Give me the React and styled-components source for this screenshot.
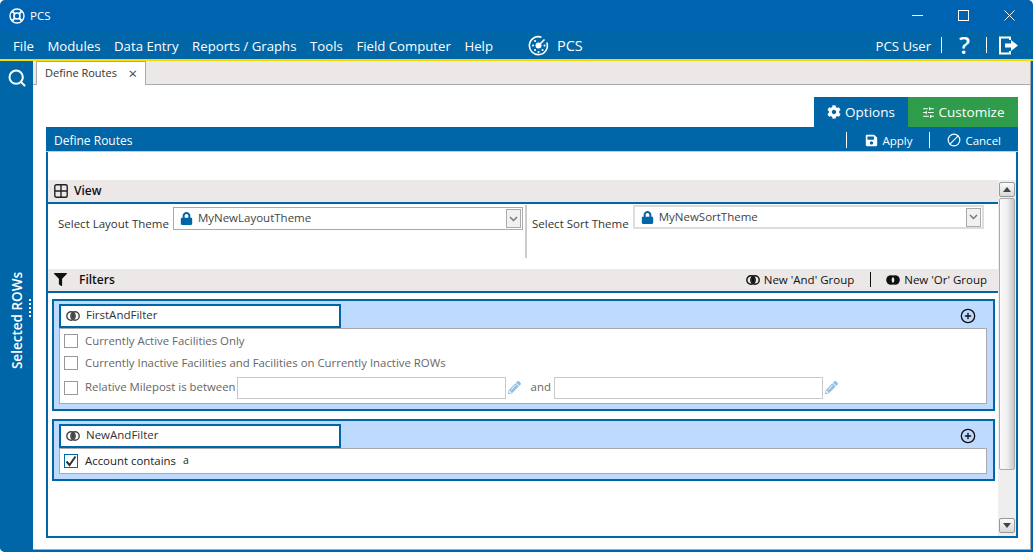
import React from "react";
import styled, { createGlobalStyle } from "styled-components";
import { FaCog, FaFilter, FaLock, FaPencilAlt, FaSave } from "react-icons/fa";
import { Ban, CirclePlus, Search, SlidersHorizontal } from "lucide-react";

const GlobalStyle = createGlobalStyle`
  html, body {
    margin: 0;
    padding: 0;
    background: #fff;
    font-family: "Open Sans", "Noto Sans", sans-serif;
  }
  * {
    box-sizing: border-box;
  }
`;

const Window = styled.div`
  width: 1033px;
  height: 552px;
  display: flex;
  flex-direction: column;
  background: #0063b1;
  border-radius: 5px 5px 0 5px;
  overflow: hidden;
`;

const TitleBar = styled.div`
  height: 31px;
  flex: none;
  display: flex;
  align-items: center;
  padding-left: 9px;
  gap: 5px;
  color: #fff;
  font-size: 11.5px;
`;

const WindowControls = styled.div`
  margin-left: auto;
  display: flex;
  align-items: center;
  padding-right: 18px;
  gap: 35px;
`;

const MenuBar = styled.div`
  height: 30px;
  flex: none;
  display: flex;
  align-items: center;
  background: #0066a8;
  border-bottom: 2px solid #f6dc00;
  color: #fff;
  font-size: 13.2px;
`;

const Menu = styled.nav`
  width: 528px;
  padding: 2px 0 0 13px;
  display: flex;
  gap: 13.6px;
`;

const Brand = styled.div`
  display: flex;
  align-items: center;
  gap: 8px;
  font-size: 14.5px;
`;

const UserArea = styled.div`
  margin-left: auto;
  padding-right: 14px;
  display: flex;
  align-items: center;
`;

const UserName = styled.span`
  margin-top: 2px;
`;

const MenuDivider = styled.span`
  width: 1px;
  height: 16px;
  background: #fff;
  margin: ${(p) => p.$margin};
`;

const Help = styled.span`
  font-size: 24px;
  font-weight: 600;
  line-height: 26px;
`;

const Body = styled.div`
  flex: 1;
  display: flex;
  min-height: 0;
`;

const Rail = styled.aside`
  position: relative;
  width: 33px;
  flex: none;
  background: #0066a8;
  color: #fff;
  display: flex;
  flex-direction: column;
  align-items: center;
  padding-top: 7px;
`;

const RailLabel = styled.div`
  writing-mode: vertical-rl;
  transform: rotate(180deg);
  margin-top: 184px;
  font-size: 13.5px;
  font-weight: 600;
  white-space: nowrap;
`;

const Grip = styled.span`
  position: absolute;
  left: 29px;
  top: 238px;
  width: 2px;
  height: 18px;
  background: repeating-linear-gradient(#fff 0 2px, transparent 2px 4px);
`;

const Main = styled.main`
  flex: 1;
  display: flex;
  flex-direction: column;
  background: #fff;
  margin: 0 2px 2px 0;
  border-right: 1px solid #a9a9a9;
  border-bottom: 1px solid #a9a9a9;
`;

const TabStrip = styled.div`
  height: 24px;
  flex: none;
  display: flex;
  padding-left: 3px;
  background: #ece8e7;
  border-bottom: 1px solid #aaa;
`;

const Tab = styled.div`
  width: 110px;
  height: 24px;
  padding: 0 8px 2px 8px;
  display: flex;
  align-items: center;
  justify-content: space-between;
  background: #fff;
  border: 1px solid #aaa;
  border-bottom: none;
  font-size: 11px;
  color: #333;
`;

const Close = styled.span`
  font-size: 15px;
  line-height: 12px;
  color: #444;
`;

const ModeTabs = styled.div`
  flex: none;
  display: flex;
  justify-content: flex-end;
  margin: 12px 12px 0 0;
`;

const ModeTab = styled.div`
  height: 30px;
  width: ${(p) => p.$width}px;
  display: flex;
  align-items: center;
  justify-content: center;
  gap: 4px;
  color: #fff;
  font-size: 13.5px;
  font-weight: 500;
  background: ${(p) => p.$bg};
`;

const Panel = styled.section`
  flex: 1;
  min-height: 0;
  margin: 0 12px 11px 13px;
  display: flex;
  flex-direction: column;
  border: 2px solid #0066a8;
  border-top: none;
`;

const PanelHeader = styled.header`
  height: 25px;
  flex: none;
  margin: 0 -2px;
  padding: 2px 17px 0 8px;
  display: flex;
  align-items: center;
  background: #0066a8;
  border-bottom: 1px solid #f6dc00;
  color: #fff;
  font-size: 12px;
`;

const HeaderAction = styled.div`
  display: flex;
  align-items: center;
  gap: 4px;
  height: 16px;
  font-size: 11.5px;
  font-weight: 500;
  padding-left: ${(p) => p.$pad}px;
  border-left: 1px solid #fff;
  margin-left: ${(p) => p.$gap}px;
`;

const CancelIcon = styled(Ban)`
  transform: scaleX(-1);
`;

const Spacer = styled.span`
  flex: 1;
`;

const PanelBody = styled.div`
  flex: 1;
  min-height: 0;
  display: flex;
  padding-top: 28px;
`;

const Content = styled.div`
  flex: 1;
  min-width: 0;
`;

const SectionHeader = styled.div`
  height: 24px;
  display: flex;
  align-items: center;
  background: #ece8e7;
  border-bottom: 2px solid #0066a8;
  padding: 0 11px 1px 6px;
  font-size: 12px;
  font-weight: 600;
  color: #111;
`;

const SectionTitle = styled.span`
  margin-left: ${(p) => p.$gap}px;
`;

const GroupAction = styled.span`
  display: flex;
  align-items: center;
  gap: 4px;
  font-size: 11.5px;
  font-weight: 400;
`;

const ActionDivider = styled.span`
  width: 1px;
  height: 15px;
  background: #111;
  margin: 0 15px 0 16px;
`;

const ViewRow = styled.div`
  height: 65px;
  display: flex;
`;

const ViewCell = styled.div`
  display: flex;
  align-items: flex-start;
  width: ${(p) => p.$width}px;
  padding-left: ${(p) => p.$pad}px;
  padding-top: ${(p) => p.$top}px;
  gap: 4px;
`;

const ViewDivider = styled.span`
  width: 2px;
  height: 53px;
  margin: 1px 5px 0 0;
  background: #ccc;
`;

const FieldLabel = styled.label`
  font-size: 11.5px;
  line-height: 16px;
  margin-top: ${(p) => p.$top}px;
  color: #333;
  white-space: nowrap;
`;

const Select = styled.div`
  width: ${(p) => p.$width}px;
  height: ${(p) => p.$height}px;
  display: flex;
  align-items: center;
  padding: 0 1px 0 6px;
  gap: 5px;
  border: ${(p) => p.$border};
  font-size: 11.5px;
  color: #444;
  background: #fff;
`;

const SelectValue = styled.span`
  flex: 1;
  margin-top: -2px;
`;

const ArrowButton = styled.span`
  width: 15px;
  height: 19px;
  display: flex;
  align-items: center;
  justify-content: center;
  background: #f1f1f1;
  border: 1px solid #aaa;
`;

const Group = styled.div`
  margin: ${(p) => p.$top}px 3px 0 4px;
  padding: 3px 6px 5px 5px;
  background: #bedaff;
  border: 2px solid #0066a8;
`;

const GroupHead = styled.div`
  display: flex;
  align-items: center;
  justify-content: space-between;
  padding-right: 11px;
`;

const NameBox = styled.div`
  width: 282px;
  height: 24px;
  display: flex;
  align-items: center;
  gap: 6px;
  padding: 0 0 3px 5px;
  background: #fff;
  border: 2px solid #0066a8;
  font-size: 11.5px;
  color: #333;

  svg {
    margin-top: 3px;
  }
`;

const Rows = styled.div`
  background: #fff;
  border: 1px solid #aaa;
  padding: ${(p) => p.$pad};
  display: flex;
  flex-direction: column;
`;

const Row = styled.div`
  height: ${(p) => p.$height}px;
  display: flex;
  align-items: center;
  padding: 0 0 2px 4px;
  font-size: 11.4px;
  color: ${(p) => (p.$active ? "#222" : "#666")};
`;

const Check = styled.span`
  width: 14px;
  height: 14px;
  flex: none;
  margin: 2px 7px 0 0;
  display: flex;
  align-items: center;
  justify-content: center;
  border: 1px solid ${(p) => (p.$checked ? "#0066a8" : "#999")};
`;

const ValueInput = styled.span`
  width: 269px;
  height: 22px;
  margin: 2px 0 0 ${(p) => p.$gap}px;
  border: 1px solid #c9c9c9;
`;

const Pencil = styled(FaPencilAlt)`
  width: 13px;
  height: 13px;
  margin: 2px 0 0 2px;
  color: #93bfe0;
`;

const AndLabel = styled.span`
  margin-left: 10px;
`;

const SmallValue = styled.span`
  margin-left: 7px;
  font-size: 10.5px;
`;

const Scrollbar = styled.div`
  width: 18px;
  flex: none;
  padding: 2px 1px 3px 1px;
  display: flex;
  flex-direction: column;
  background: #eee;
`;

const ScrollButton = styled.div`
  height: 15px;
  flex: none;
  display: flex;
  align-items: center;
  justify-content: center;
  background: linear-gradient(#fafafa, #d8d8d8);
  border: 1px solid #999;
  border-radius: 2px;
`;

const Thumb = styled.div`
  height: 272px;
  margin-top: 1px;
  background: linear-gradient(90deg, #fafafa, #f0f0f0 50%, #c8c8c8);
  border: 1px solid #aaa;
  border-radius: 2px;
`;

const Logo = ({ size = 16 }) => (
  <svg width={size} height={size} viewBox="0 0 16 16" fill="none" stroke="#fff">
    <circle cx="8" cy="8" r="7" strokeWidth="1.4" />
    <circle cx="8" cy="8" r="3" strokeWidth="1.6" />
    <path d="M3.5 3.5 6 6M12.5 3.5 10 6M3.5 12.5 6 10M12.5 12.5 10 10" strokeWidth="1.8" />
  </svg>
);

const BrandLogo = () => (
  <svg width="21" height="21" viewBox="0 0 21 21" fill="none" stroke="#fff">
    <path d="M13.5 2.2A9 9 0 1 0 18.8 7.5" strokeWidth="1.6" />
    <circle cx="10.5" cy="10.5" r="3" fill="#fff" stroke="none" />
    <path d="M12 9 16.5 4.5" strokeWidth="1.6" />
    <path d="M5 10.5h.1M7 6h.1M7 15h.1M10.500 17h.1M14.500 15h.1M16.500 10.500h.1" strokeWidth="2" strokeLinecap="round" />
  </svg>
);

const Logout = () => (
  <svg width="21" height="21" viewBox="0 0 21 21" fill="none">
    <path d="M12 5V2.500H2V18.500H12V16" stroke="#fff" strokeWidth="2" />
    <path d="M7 8.500H13V5L20 10.500 13 16V12.500H7Z" fill="#fff" />
  </svg>
);

const Venn = ({ color = "#444", filled }) => (
  <svg width="14" height="10" viewBox="0 0 14 10">
    {filled ? (
      <>
        <circle cx="5" cy="5" r="4.800" fill={color} />
        <circle cx="9" cy="5" r="4.800" fill={color} />
        <path d="M7 2a4 4 0 0 1 0 6 4 4 0 0 1 0-6Z" fill="#ece8e7" />
      </>
    ) : (
      <>
        <circle cx="5" cy="5" r="4.200" fill="none" stroke={color} strokeWidth="1.400" />
        <circle cx="9" cy="5" r="4.200" fill="none" stroke={color} strokeWidth="1.400" />
        <path d="M7 1.500a4.200 4.200 0 0 1 0 7 4.200 4.200 0 0 1 0-7Z" fill={color} />
      </>
    )}
  </svg>
);

const GridIcon = () => (
  <svg width="14" height="14" viewBox="0 0 14 14" fill="none" stroke="#222" strokeWidth="1.400">
    <rect x=".8" y=".8" width="12.400" height="12.400" rx="1.500" />
    <path d="M7 1v12M1 7h12" />
  </svg>
);

const Caret = ({ up }) => (
  <svg width="8" height="5" viewBox="0 0 8 5">
    <path d={up ? "M0 5 4 0 8 5Z" : "M0 0 4 5 8 0Z"} fill="#444" />
  </svg>
);

const Chevron = () => (
  <svg width="9" height="6" viewBox="0 0 9 6" fill="none" stroke="#777" strokeWidth="1.500">
    <path d="M1 1 4.500 4.500 8 1" />
  </svg>
);

const Tick = () => (
  <svg width="12" height="12" viewBox="0 0 12 12" fill="none" stroke="#333" strokeWidth="2">
    <path d="M1.500 6.500 4.500 10 10.500 1.500" />
  </svg>
);

const GroupHeadRow = ({ name }) => (
  <GroupHead>
    <NameBox>
      <Venn />
      {name}
    </NameBox>
    <CirclePlus size={16} color="#111" strokeWidth={2} />
  </GroupHead>
);

const App = () => {
  return (
    <>
      <GlobalStyle />
      <Window>
        <TitleBar>
          <Logo />
          PCS
          <WindowControls>
            <svg width="11" height="11" viewBox="0 0 11 11" stroke="#fff"><path d="M0 5.500h11" /></svg>
            <svg width="11" height="11" viewBox="0 0 11 11" fill="none" stroke="#fff"><rect x=".5" y=".5" width="10" height="10" /></svg>
            <svg width="11" height="11" viewBox="0 0 11 11" stroke="#fff"><path d="M.5.500l10 10M10.500.500l-10 10" /></svg>
          </WindowControls>
        </TitleBar>
        <MenuBar>
          <Menu>
            <span>File</span>
            <span>Modules</span>
            <span>Data Entry</span>
            <span>Reports / Graphs</span>
            <span>Tools</span>
            <span>Field Computer</span>
            <span>Help</span>
          </Menu>
          <Brand>
            <BrandLogo />
            PCS
          </Brand>
          <UserArea>
            <UserName>PCS User</UserName>
            <MenuDivider $margin="0 17px 0 10px" />
            <Help>?</Help>
            <MenuDivider $margin="0 11px 0 16px" />
            <Logout />
          </UserArea>
        </MenuBar>
        <Body>
          <Rail>
            <Search size={20} strokeWidth={2.4} />
            <RailLabel>Selected ROWs</RailLabel>
            <Grip />
          </Rail>
          <Main>
            <TabStrip>
              <Tab>
                Define Routes
                <Close>×</Close>
              </Tab>
            </TabStrip>
            <ModeTabs>
              <ModeTab $width={94} $bg="#0066a8">
                <FaCog size={14} />
                Options
              </ModeTab>
              <ModeTab $width={110} $bg="#2e9c4b">
                <SlidersHorizontal size={13} />
                Customize
              </ModeTab>
            </ModeTabs>
            <Panel>
              <PanelHeader>
                Define Routes
                <Spacer />
                <HeaderAction $pad={18} $gap={0}>
                  <FaSave size={13} />
                  Apply
                </HeaderAction>
                <HeaderAction $pad={17} $gap={17}>
                  <CancelIcon size={14} />
                  Cancel
                </HeaderAction>
              </PanelHeader>
              <PanelBody>
                <Content>
                  <SectionHeader>
                    <GridIcon />
                    <SectionTitle $gap={6}>View</SectionTitle>
                  </SectionHeader>
                  <ViewRow>
                    <ViewCell $width={477} $pad={10} $top={3}>
                      <FieldLabel $top={9}>Select Layout Theme</FieldLabel>
                      <Select $width={350} $height={23} $border="1px solid #aaa">
                        <FaLock size={13} color="#0066a8" />
                        <SelectValue>MyNewLayoutTheme</SelectValue>
                        <ArrowButton><Chevron /></ArrowButton>
                      </Select>
                    </ViewCell>
                    <ViewDivider />
                    <ViewCell $pad={0} $top={1}>
                      <FieldLabel $top={11}>Select Sort Theme</FieldLabel>
                      <Select $width={351} $height={24} $border="2px solid #ddd">
                        <FaLock size={13} color="#0066a8" />
                        <SelectValue>MyNewSortTheme</SelectValue>
                        <ArrowButton><Chevron /></ArrowButton>
                      </Select>
                    </ViewCell>
                  </ViewRow>
                  <SectionHeader>
                    <FaFilter size={13} color="#111" />
                    <SectionTitle $gap={12}>Filters</SectionTitle>
                    <Spacer />
                    <GroupAction>
                      <Venn color="#111" />
                      New 'And' Group
                    </GroupAction>
                    <ActionDivider />
                    <GroupAction>
                      <Venn color="#111" filled />
                      New 'Or' Group
                    </GroupAction>
                  </SectionHeader>
                  <Group $top={6}>
                    <GroupHeadRow name="FirstAndFilter" />
                    <Rows $pad="1px 0 2px">
                      <Row $height={22}>
                        <Check />
                        Currently Active Facilities Only
                      </Row>
                      <Row $height={22}>
                        <Check />
                        Currently Inactive Facilities and Facilities on Currently Inactive ROWs
                      </Row>
                      <Row $height={27}>
                        <Check />
                        Relative Milepost is between
                        <ValueInput $gap={1} />
                        <Pencil />
                        <AndLabel>and</AndLabel>
                        <ValueInput $gap={3} />
                        <Pencil />
                      </Row>
                    </Rows>
                  </Group>
                  <Group $top={8}>
                    <GroupHeadRow name="NewAndFilter" />
                    <Rows $pad="0">
                      <Row $height={24} $active>
                        <Check $checked><Tick /></Check>
                        Account contains
                        <SmallValue>a</SmallValue>
                      </Row>
                    </Rows>
                  </Group>
                </Content>
                <Scrollbar>
                  <ScrollButton><Caret up /></ScrollButton>
                  <Thumb />
                  <Spacer />
                  <ScrollButton><Caret /></ScrollButton>
                </Scrollbar>
              </PanelBody>
            </Panel>
          </Main>
        </Body>
      </Window>
    </>
  );
};

export default App;
